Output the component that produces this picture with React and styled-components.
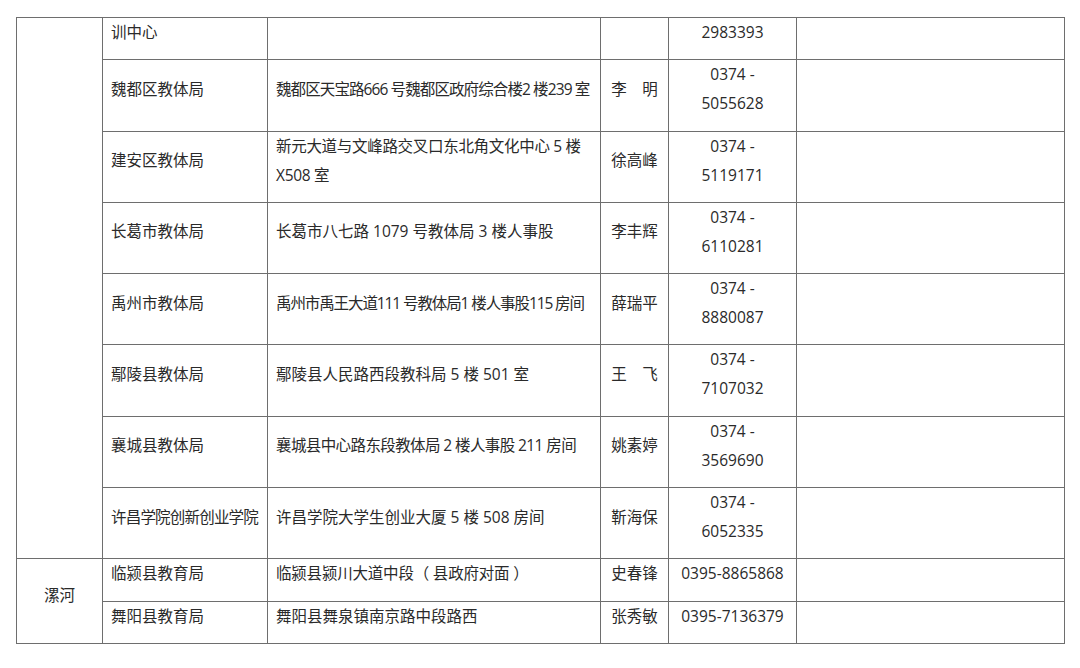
import React from "react";
import styled, { createGlobalStyle } from "styled-components";

const Global = createGlobalStyle`
  html, body { margin: 0; padding: 0; background: #ffffff; }
  body { font-family: "Open Sans", "Noto Sans CJK SC", sans-serif; }
`;

const Page = styled.div`
  padding: 17px 0 0 16px;
  width: 1080px;
  height: 668px;
  box-sizing: border-box;
  overflow: hidden;
`;

const Table = styled.table`
  border-collapse: collapse;
  table-layout: fixed;
  width: 1048px;
  color: #2a2a2a;
  font-family: "Open Sans", "Noto Sans CJK SC", sans-serif;
  font-size: 15.5px;
  line-height: 29px;
`;

const Col = styled.col`
  width: ${(p) => p.$w}px;
`;

const Cell = styled.td`
  border: 1px solid #6e6e6e;
  padding: 0 ${(p) => (p.$align === "center" ? "0" : "8px")} 12.3px;
  text-align: ${(p) => p.$align || "left"};
  vertical-align: middle;
  white-space: nowrap;
  letter-spacing: ${(p) => p.$ls || "0"};
  overflow: hidden;
`;

const Line = styled.div`
  display: block;
`;

const colWidths = [86, 165, 333, 68, 128, 268];

const rows = [
  { org: "训中心", addr: "", name: "", phone: ["2983393"] },
  { org: "魏都区教体局", addr: ["魏都区天宝路666 号魏都区政府综合楼2 楼239 室"], addrLs: "-0.9px", name: "李　明", phone: ["0374 -", "5055628"] },
  { org: "建安区教体局", addr: ["新元大道与文峰路交叉口东北角文化中心 5 楼", "X508 室"], addrLs: "-0.3px", name: "徐高峰", phone: ["0374 -", "5119171"] },
  { org: "长葛市教体局", addr: ["长葛市八七路 1079 号教体局 3 楼人事股"], name: "李丰辉", phone: ["0374 -", "6110281"] },
  { org: "禹州市教体局", addr: ["禹州市禹王大道111 号教体局1 楼人事股115 房间"], addrLs: "-1.1px", name: "薛瑞平", phone: ["0374 -", "8880087"] },
  { org: "鄢陵县教体局", addr: ["鄢陵县人民路西段教科局 5 楼 501 室"], name: "王　飞", phone: ["0374 -", "7107032"] },
  { org: "襄城县教体局", addr: ["襄城县中心路东段教体局 2 楼人事股 211 房间"], addrLs: "-0.6px", name: "姚素婷", phone: ["0374 -", "3569690"] },
  { org: "许昌学院创新创业学院", orgLs: "-0.8px", addr: ["许昌学院大学生创业大厦 5 楼 508 房间"], name: "靳海保", phone: ["0374 -", "6052335"] },
];

const luohe = [
  { org: "临颍县教育局", addr: ["临颍县颍川大道中段（ 县政府对面 ）"], addrLs: "-0.2px", name: "史春锋", phone: ["0395-8865868"] },
  { org: "舞阳县教育局", addr: ["舞阳县舞泉镇南京路中段路西"], name: "张秀敏", phone: ["0395-7136379"] },
];

const Lines = ({ items }) =>
  (items || []).map((t, i) => <Line key={i}>{t}</Line>);

const DataCells = ({ r }) => (
  <>
    <Cell $ls={r.orgLs}>{r.org}</Cell>
    <Cell $ls={r.addrLs}>
      <Lines items={Array.isArray(r.addr) ? r.addr : [r.addr]} />
    </Cell>
    <Cell $align="center">{r.name}</Cell>
    <Cell $align="center">
      <Lines items={r.phone} />
    </Cell>
    <Cell />
  </>
);

export default function App() {
  return (
    <Page>
      <Global />
      <Table>
        <colgroup>
          {colWidths.map((w, i) => (
            <Col key={i} $w={w} />
          ))}
        </colgroup>
        <tbody>
          {rows.map((r, i) => (
            <tr key={i}>
              {i === 0 && <Cell rowSpan={rows.length} />}
              <DataCells r={r} />
            </tr>
          ))}
          {luohe.map((r, i) => (
            <tr key={"l" + i}>
              {i === 0 && (
                <Cell rowSpan={luohe.length} $align="center">
                  漯河
                </Cell>
              )}
              <DataCells r={r} />
            </tr>
          ))}
        </tbody>
      </Table>
    </Page>
  );
}
